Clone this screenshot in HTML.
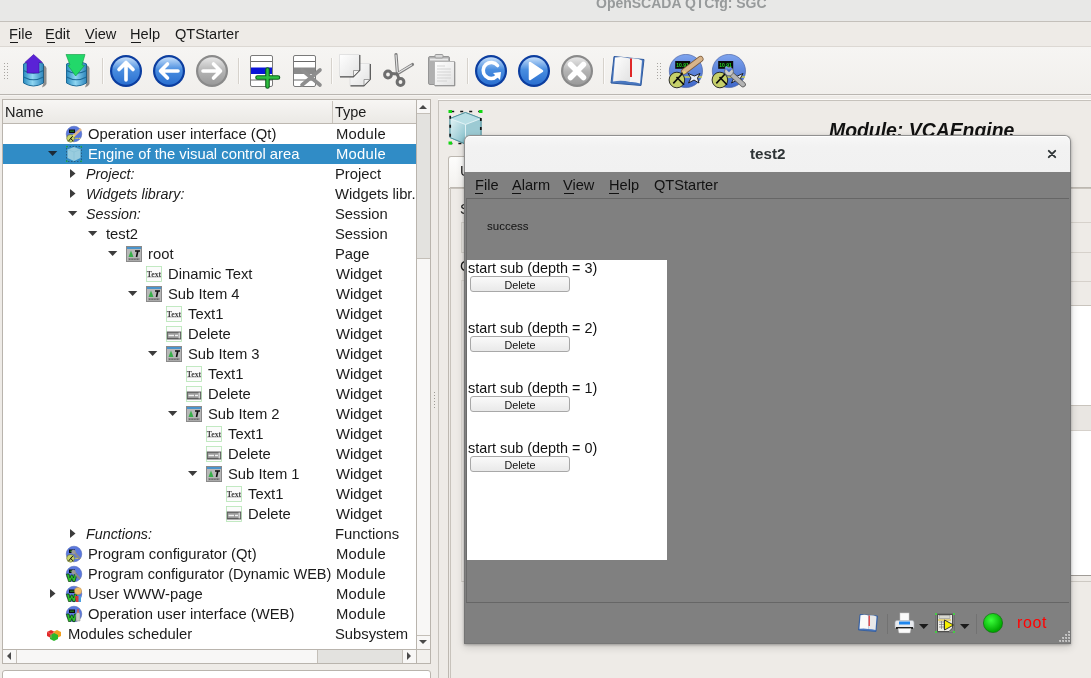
<!DOCTYPE html><html><head><meta charset='utf-8'><style>
*{margin:0;padding:0;box-sizing:border-box}
html,body{width:1091px;height:678px;overflow:hidden;background:#eeebe7;font-family:"Liberation Sans",sans-serif;position:relative}
.a{position:absolute}
.t{white-space:pre;will-change:transform}
svg{position:absolute;overflow:visible;will-change:transform}
</style></head><body><div class="a" style="left:0px;top:0px;width:1091px;height:21px;background:#e8e8e7"></div>
<div class="a" style="left:0px;top:21px;width:1091px;height:1px;background:#c4c0bb"></div>
<div class="a t" style="left:596px;top:-6.85px;font-size:14px;line-height:20px;color:#979a9b;font-weight:bold">OpenSCADA QTCfg: SGC</div>
<div class="a" style="left:0px;top:22px;width:1091px;height:24px;background:#eeebe7"></div>
<div class="a" style="left:0px;top:46px;width:1091px;height:1px;background:#dcd8d3"></div>
<div class="a t" style="left:9.4px;top:23.94px;font-size:14.6px;line-height:20px;color:#1a1a1a;">File</div>
<div class="a t" style="left:45.4px;top:23.94px;font-size:14.6px;line-height:20px;color:#1a1a1a;">Edit</div>
<div class="a t" style="left:85.4px;top:23.94px;font-size:14.6px;line-height:20px;color:#1a1a1a;">View</div>
<div class="a t" style="left:130.4px;top:23.94px;font-size:14.6px;line-height:20px;color:#1a1a1a;">Help</div>
<div class="a t" style="left:175.4px;top:23.94px;font-size:14.6px;line-height:20px;color:#1a1a1a;">QTStarter</div>
<div class="a" style="left:10px;top:42px;width:8px;height:1px;background:#1a1a1a"></div>
<div class="a" style="left:47px;top:42px;width:8px;height:1px;background:#1a1a1a"></div>
<div class="a" style="left:85px;top:42px;width:10px;height:1px;background:#1a1a1a"></div>
<div class="a" style="left:131px;top:42px;width:10px;height:1px;background:#1a1a1a"></div>
<div class="a" style="left:0px;top:47px;width:1091px;height:47px;background:linear-gradient(#f6f5f3,#f1efec)"></div>
<div class="a" style="left:0px;top:94px;width:1091px;height:1px;background:#bab6b1"></div>
<div class="a" style="left:0px;top:95px;width:1091px;height:1px;background:#f6f4f1"></div>
<div class="a" style="left:438px;top:99px;width:653px;height:1px;background:#fdfcfb"></div>
<div class="a" style="left:4px;top:63px;width:1px;height:1px;background:#a8a5a0"></div>
<div class="a" style="left:7px;top:63px;width:1px;height:1px;background:#a8a5a0"></div>
<div class="a" style="left:4px;top:66px;width:1px;height:1px;background:#a8a5a0"></div>
<div class="a" style="left:7px;top:66px;width:1px;height:1px;background:#a8a5a0"></div>
<div class="a" style="left:4px;top:69px;width:1px;height:1px;background:#a8a5a0"></div>
<div class="a" style="left:7px;top:69px;width:1px;height:1px;background:#a8a5a0"></div>
<div class="a" style="left:4px;top:72px;width:1px;height:1px;background:#a8a5a0"></div>
<div class="a" style="left:7px;top:72px;width:1px;height:1px;background:#a8a5a0"></div>
<div class="a" style="left:4px;top:75px;width:1px;height:1px;background:#a8a5a0"></div>
<div class="a" style="left:7px;top:75px;width:1px;height:1px;background:#a8a5a0"></div>
<div class="a" style="left:4px;top:78px;width:1px;height:1px;background:#a8a5a0"></div>
<div class="a" style="left:7px;top:78px;width:1px;height:1px;background:#a8a5a0"></div>
<svg width="0" height="0" style="position:absolute"><defs>
<linearGradient id="gBlueBall" x1="0" y1="0" x2="0" y2="1"><stop offset="0" stop-color="#c8e0fa"/><stop offset="0.45" stop-color="#4a8ee0"/><stop offset="1" stop-color="#2a6fd0"/></linearGradient>
<linearGradient id="gGrayBall" x1="0" y1="0" x2="0" y2="1"><stop offset="0" stop-color="#e8e8e8"/><stop offset="0.5" stop-color="#b4b4b4"/><stop offset="1" stop-color="#9a9a9a"/></linearGradient>
<linearGradient id="gCyl" x1="0" y1="0" x2="1" y2="0"><stop offset="0" stop-color="#2a8cc0"/><stop offset="0.45" stop-color="#8fd6f2"/><stop offset="1" stop-color="#2d86bd"/></linearGradient>
<linearGradient id="gPage" x1="0" y1="0" x2="1" y2="1"><stop offset="0" stop-color="#ffffff"/><stop offset="1" stop-color="#e2e2e2"/></linearGradient>
<linearGradient id="gCube" x1="0" y1="0" x2="1" y2="1"><stop offset="0" stop-color="#e4f4f6"/><stop offset="1" stop-color="#7fbcc8"/></linearGradient>
<linearGradient id="gVis" x1="0" y1="0" x2="0" y2="1"><stop offset="0" stop-color="#7ea4ee"/><stop offset="1" stop-color="#3e66c8"/></linearGradient>
</defs></svg>
<svg style="left:22px;top:54px;" width="25" height="34" viewBox="0 0 25 34"><path d="M1.5 10 Q11.5 5 21.5 10 L21.5 29 Q11.5 35 1.5 29 Z" fill="url(#gCyl)" stroke="#1d6a98" stroke-width="1"/><path d="M1.5 16.5 Q11.5 22 21.5 16.5 M1.5 23 Q11.5 28.5 21.5 23" fill="none" stroke="#1d6a98" stroke-width="1.2"/><path d="M21.5 11 Q24 12 24.5 14 L24.5 30 Q23 33 20 33.5 L21.5 29 Z" fill="#3a3a3a" opacity="0.55"/><path d="M11.6 0.5 L20.5 8.5 L17 8.5 L17 19 L5 19 L5 8.5 L2.8 8.5 Z" fill="#5a22d6" stroke="#3d10a8" stroke-width="0.6"/></svg>
<svg style="left:65px;top:54px;" width="25" height="34" viewBox="0 0 25 34"><path d="M1.5 10 Q11.5 5 21.5 10 L21.5 29 Q11.5 35 1.5 29 Z" fill="url(#gCyl)" stroke="#1d6a98" stroke-width="1"/><path d="M1.5 16.5 Q11.5 22 21.5 16.5 M1.5 23 Q11.5 28.5 21.5 23" fill="none" stroke="#1d6a98" stroke-width="1.2"/><path d="M21.5 11 Q24 12 24.5 14 L24.5 30 Q23 33 20 33.5 L21.5 29 Z" fill="#3a3a3a" opacity="0.55"/><path d="M1 0.5 L20 0.5 L17 11 L19.5 11.5 L10.7 22 L3 11.5 L5 11 Z" fill="#22d86a" stroke="#0e9a3e" stroke-width="0.6"/></svg>
<svg style="left:109px;top:54px;" width="34" height="34" viewBox="0 0 34 34"><circle cx="17" cy="17" r="16" fill="#0b3d9f"/><circle cx="17" cy="17" r="13.8" fill="url(#gBlueBall)"/><path d="M17 26 L17 9 M10 15.5 L17 8.5 L24 15.5" fill="none" stroke="#fff" stroke-width="3.6" stroke-linecap="round" stroke-linejoin="round"/></svg>
<svg style="left:152px;top:54px;" width="34" height="34" viewBox="0 0 34 34"><circle cx="17" cy="17" r="16" fill="#0b3d9f"/><circle cx="17" cy="17" r="13.8" fill="url(#gBlueBall)"/><path d="M26 17 L9 17 M15.5 10 L8.5 17 L15.5 24" fill="none" stroke="#fff" stroke-width="3.6" stroke-linecap="round" stroke-linejoin="round"/></svg>
<svg style="left:195px;top:54px;" width="34" height="34" viewBox="0 0 34 34"><circle cx="17" cy="17" r="16" fill="#8a8a8a"/><circle cx="17" cy="17" r="13.8" fill="url(#gGrayBall)"/><path d="M8 17 L25 17 M18.5 10 L25.5 17 L18.5 24" fill="none" stroke="#fff" stroke-width="3.6" stroke-linecap="round" stroke-linejoin="round"/></svg>
<svg style="left:474px;top:54px;" width="34" height="34" viewBox="0 0 34 34"><circle cx="17" cy="17" r="16" fill="#0b3d9f"/><circle cx="17" cy="17" r="13.8" fill="url(#gBlueBall)"/><path d="M23.5 11.5 A8 8 0 1 0 23 22" fill="none" stroke="#fff" stroke-width="3.6" stroke-linecap="round" stroke-linejoin="round"/><path d="M19 19 L27 18 L26 26 Z" fill="#fff"/></svg>
<svg style="left:517px;top:54px;" width="34" height="34" viewBox="0 0 34 34"><circle cx="17" cy="17" r="16" fill="#0b3d9f"/><circle cx="17" cy="17" r="13.8" fill="url(#gBlueBall)"/><path d="M13 9 L25 17 L13 25 Z" fill="#fff" stroke="#fff" stroke-width="2.5" stroke-linejoin="round"/></svg>
<svg style="left:560px;top:54px;" width="34" height="34" viewBox="0 0 34 34"><circle cx="17" cy="17" r="16" fill="#8a8a8a"/><circle cx="17" cy="17" r="13.8" fill="url(#gGrayBall)"/><path d="M10.5 10.5 L23.5 23.5 M23.5 10.5 L10.5 23.5" fill="none" stroke="#fff" stroke-width="5.5" stroke-linecap="round"/></svg>
<div class="a" style="left:102px;top:58px;width:1px;height:26px;background:#d6d2cc"></div>
<div class="a" style="left:103px;top:58px;width:1px;height:26px;background:#fbfaf9"></div>
<div class="a" style="left:238px;top:58px;width:1px;height:26px;background:#d6d2cc"></div>
<div class="a" style="left:239px;top:58px;width:1px;height:26px;background:#fbfaf9"></div>
<div class="a" style="left:331px;top:58px;width:1px;height:26px;background:#d6d2cc"></div>
<div class="a" style="left:332px;top:58px;width:1px;height:26px;background:#fbfaf9"></div>
<div class="a" style="left:467px;top:58px;width:1px;height:26px;background:#d6d2cc"></div>
<div class="a" style="left:468px;top:58px;width:1px;height:26px;background:#fbfaf9"></div>
<div class="a" style="left:603px;top:58px;width:1px;height:26px;background:#d6d2cc"></div>
<div class="a" style="left:604px;top:58px;width:1px;height:26px;background:#fbfaf9"></div>
<svg style="left:250px;top:55px;" width="30" height="33" viewBox="0 0 30 33"><rect x="0.5" y="0.5" width="22" height="31" rx="1.5" fill="#fff" stroke="#7a7a7a"/><path d="M1 6.5 H22 M1 25 H22" stroke="#6a6a6a" stroke-width="1"/><rect x="1" y="12.5" width="21" height="6.5" fill="#0a14d8"/><path d="M17.5 14.5 V31.5 M7.5 22.5 H28" stroke="#0b5e1a" stroke-width="4.6" stroke-linecap="round"/><path d="M17.5 14.5 V31.5 M7.5 22.5 H28" stroke="#2fc040" stroke-width="2.4" stroke-linecap="round"/></svg>
<svg style="left:293px;top:55px;" width="30" height="33" viewBox="0 0 30 33"><rect x="0.5" y="0.5" width="22" height="31" rx="1.5" fill="#fff" stroke="#7a7a7a"/><path d="M1 6.5 H22 M1 25 H22" stroke="#6a6a6a" stroke-width="1"/><rect x="1" y="12.5" width="21" height="6.5" fill="#8a8a8a"/><path d="M9 15 L27 30 M27 15 L9 30" stroke="#8e8e8e" stroke-width="3.6" stroke-linecap="round"/></svg>
<svg style="left:339px;top:54px;" width="33" height="34" viewBox="0 0 33 34"><path d="M11.0 9.5 H31.0 V25 L24.5 31.5 H11.0 Z" fill="url(#gPage)" stroke="#dcdcdc" stroke-width="0.8"/><path d="M31.3 10 V25.3 L24.8 31.8 H11.5" fill="none" stroke="#505050" stroke-width="1.2"/><path d="M30.5 25.5 H25.0 V31" fill="#f4f4f4" stroke="#8a8a8a" stroke-width="0.8"/><path d="M0.5 0.5 H20.5 V16 L14 22.5 H0.5 Z" fill="url(#gPage)" stroke="#dcdcdc" stroke-width="0.8"/><path d="M20.8 1 V16.3 L14.3 22.8 H1" fill="none" stroke="#505050" stroke-width="1.2"/><path d="M20 16.5 H14.5 V22" fill="#f4f4f4" stroke="#8a8a8a" stroke-width="0.8"/></svg>
<svg style="left:383px;top:53px;" width="32" height="34" viewBox="0 0 32 34"><path d="M13 1.5 L14.5 21 M29.5 11.5 L14 21" stroke="#7e7e7e" stroke-width="3.2" stroke-linecap="round"/><path d="M13 2 L14.3 19 M28.5 12 L15 20" stroke="#e4e4e4" stroke-width="1.2" stroke-linecap="round"/><circle cx="5" cy="21.5" r="3.4" fill="none" stroke="#6e6e6e" stroke-width="3"/><circle cx="17.5" cy="29" r="3.4" fill="none" stroke="#6e6e6e" stroke-width="3"/><path d="M8 20.5 L14 21 L16 25.5" stroke="#6e6e6e" stroke-width="3" fill="none"/></svg>
<svg style="left:427px;top:54px;" width="30" height="33" viewBox="0 0 30 33"><rect x="1.5" y="2.5" width="21" height="28" rx="1.5" fill="#b0b0b0" stroke="#959595"/><rect x="3" y="4.5" width="18" height="2" fill="#e8e8e8"/><rect x="8" y="0.5" width="8" height="3.5" rx="1" fill="#d8d8d8" stroke="#9a9a9a"/><rect x="7.5" y="7.5" width="20" height="24" fill="url(#gPage)" stroke="#b4b4b4"/><path d="M27.8 8 V31.8 H8" fill="none" stroke="#8a8a8a" stroke-width="1"/><path d="M10 12 H18 M10 15 H24 M10 18 H24 M10 21 H24 M10 24 H24 M10 27 H20" stroke="#d0d0d0" stroke-width="0.9"/></svg>
<svg style="left:610px;top:55px;" width="36" height="33" viewBox="0 0 36 33"><path d="M4 1.5 L34 4.5 L31 30.5 L1 28 Z" fill="#4a78c0" stroke="#2f5a9e" stroke-width="1"/><path d="M5 2.5 Q13 1 20 3.5 L20 27 Q12 25 3 26.5 Z" fill="url(#gPage)"/><path d="M20 3.5 Q27 2.5 32 5.5 L30 28.5 Q25 26.5 20 27 Z" fill="#f4f4f4"/><path d="M21 3.5 L21 22" stroke="#e02828" stroke-width="2"/></svg>
<div class="a" style="left:657px;top:63px;width:1px;height:1px;background:#a8a5a0"></div>
<div class="a" style="left:660px;top:63px;width:1px;height:1px;background:#a8a5a0"></div>
<div class="a" style="left:657px;top:66px;width:1px;height:1px;background:#a8a5a0"></div>
<div class="a" style="left:660px;top:66px;width:1px;height:1px;background:#a8a5a0"></div>
<div class="a" style="left:657px;top:69px;width:1px;height:1px;background:#a8a5a0"></div>
<div class="a" style="left:660px;top:69px;width:1px;height:1px;background:#a8a5a0"></div>
<div class="a" style="left:657px;top:72px;width:1px;height:1px;background:#a8a5a0"></div>
<div class="a" style="left:660px;top:72px;width:1px;height:1px;background:#a8a5a0"></div>
<div class="a" style="left:657px;top:75px;width:1px;height:1px;background:#a8a5a0"></div>
<div class="a" style="left:660px;top:75px;width:1px;height:1px;background:#a8a5a0"></div>
<div class="a" style="left:657px;top:78px;width:1px;height:1px;background:#a8a5a0"></div>
<div class="a" style="left:660px;top:78px;width:1px;height:1px;background:#a8a5a0"></div>
<svg style="left:669px;top:54px;" width="34" height="34" viewBox="0 0 34 34"><circle cx="16.9" cy="17" r="16.6" fill="url(#gVis)" stroke="#4a64a8" stroke-width="0.7"/><rect x="6.2" y="7" width="15" height="7.8" fill="#0a0a0a"/><text x="7.3" y="13" font-family="Liberation Sans" font-size="6" font-weight="bold" fill="#22dd22" textLength="12.5" lengthAdjust="spacingAndGlyphs">10.91</text><path d="M5 23 H33" stroke="#e0e040" stroke-width="1.3"/><path d="M19 19.5 L22 24 L19.5 29 L25 26 L30 29 L28.5 24 L31 19.5 L25.5 22 Z" fill="#e8ecf4" stroke="#111" stroke-width="0.9"/><circle cx="7.9" cy="26" r="7.8" fill="#c6d06a" stroke="#1a1a1a" stroke-width="0.9"/><path d="M4.3 29.4 L13.2 19.8 M7.5 23 L15 30.8" stroke="#0a0a0a" stroke-width="1.6"/><path d="M15 17.5 L31.5 5" stroke="#7a5a3a" stroke-width="6" stroke-linecap="round"/><path d="M15 17.5 L31.5 5" stroke="#d8b48a" stroke-width="4.6" stroke-linecap="round"/><path d="M12.5 20 L15.5 16.5 L17.5 19 Z" fill="#e8d870"/><path d="M12.2 20.3 L13.6 18.8" stroke="#111" stroke-width="1.4"/></svg>
<svg style="left:712px;top:54px;" width="34" height="34" viewBox="0 0 34 34"><circle cx="16.9" cy="17" r="16.6" fill="url(#gVis)" stroke="#4a64a8" stroke-width="0.7"/><rect x="6.2" y="7" width="15" height="7.8" fill="#0a0a0a"/><text x="7.3" y="13" font-family="Liberation Sans" font-size="6" font-weight="bold" fill="#22dd22" textLength="12.5" lengthAdjust="spacingAndGlyphs">10.91</text><path d="M5 23 H33" stroke="#e0e040" stroke-width="1.3"/><path d="M19 19.5 L22 24 L19.5 29 L25 26 L30 29 L28.5 24 L31 19.5 L25.5 22 Z" fill="#e8ecf4" stroke="#111" stroke-width="0.9"/><circle cx="7.9" cy="26" r="7.8" fill="#c6d06a" stroke="#1a1a1a" stroke-width="0.9"/><path d="M4.3 29.4 L13.2 19.8 M7.5 23 L15 30.8" stroke="#0a0a0a" stroke-width="1.6"/><path d="M18 19 L31 30.5" stroke="#5a5a5a" stroke-width="5.6" stroke-linecap="round"/><path d="M18 19 L31 30.5" stroke="#b4b4b4" stroke-width="4" stroke-linecap="round"/><circle cx="17" cy="17.5" r="4.4" fill="#c8c8c8" stroke="#5a5a5a" stroke-width="0.8"/><path d="M13.5 13 L17 16.5 L19.5 14" stroke="url(#gVis)" stroke-width="2.6" fill="none"/></svg>
<div class="a" style="left:2px;top:99px;width:429px;height:565px;border:1px solid #b9b4ad;background:#fff"></div>
<div class="a" style="left:3px;top:100px;width:413px;height:23px;background:linear-gradient(#f7f6f4,#ebe9e5)"></div>
<div class="a" style="left:3px;top:123px;width:413px;height:1px;background:#bdb8b1"></div>
<div class="a" style="left:332px;top:101px;width:1px;height:22px;background:#c8c3bc"></div>
<div class="a t" style="left:5px;top:101.68px;font-size:14.5px;line-height:20px;color:#1b1b1b;">Name</div>
<div class="a t" style="left:335px;top:101.68px;font-size:14.5px;line-height:20px;color:#1b1b1b;">Type</div>
<div class="a" style="left:3px;top:144px;width:413px;height:20px;background:#308cc6"></div>
<div class="a" style="left:3px;top:124px;width:413px;height:525px;overflow:hidden">
<div class="a" style="left:-3px;top:-124px;width:1091px;height:678px">
<svg style="left:66px;top:126px;" width="16" height="16" viewBox="0 0 16 16"><circle cx="8" cy="8" r="7.8" fill="#5a78de" stroke="#4860b0" stroke-width="0.5"/><rect x="3" y="3.5" width="6" height="3.5" fill="#0c0c0c"/><rect x="4" y="4.5" width="4" height="1.5" fill="#1d6a1d"/><path d="M8 12.3 H15" stroke="#dcd84a" stroke-width="1.3" stroke-dasharray="1.5 0.8"/><circle cx="4.6" cy="12.3" r="3.9" fill="#c8d46a" stroke="#4a5020" stroke-width="0.5"/><path d="M2.6 15 L6.8 10 M4.2 12 L7 14.8" stroke="#111" stroke-width="1"/><path d="M7.5 10 L15 3" stroke="#dcb48c" stroke-width="2.4"/><path d="M7 10.5 L8.5 9" stroke="#e0e070" stroke-width="2"/></svg>
<div class="a t" style="left:87.5px;top:123.97px;font-size:14.8px;line-height:20px;color:#1b1b1b;">Operation user interface (Qt)</div>
<div class="a t" style="left:335.5px;top:123.97px;font-size:14.8px;line-height:20px;color:#1b1b1b;letter-spacing:0.25px">Module</div>
<svg style="left:48px;top:151px;" width="10" height="5" viewBox="0 0 10 5"><path d="M0 0 H9.3 L4.65 5 Z" fill="#1b2a38"/></svg>
<svg style="left:66px;top:146px;" width="16" height="16" viewBox="0 0 16 16"><g opacity="0.8"><path d="M1.5 3.5 L8 1 L14.5 3.5 L14.5 12 L8 15 L1.5 12 Z" fill="#b4dce4"/><path d="M1.5 3.5 L8 6 L14.5 3.5 M8 6 L8 15" fill="none" stroke="#9cccd6" stroke-width="0.6"/></g><rect x="0.5" y="0.5" width="15" height="15" fill="none" stroke="#1a2a3a" stroke-width="0.9" stroke-dasharray="1.5 1.5" opacity="0.55"/><rect x="0" y="0" width="1.5" height="1.5" fill="#22aa44"/><rect x="14.5" y="0" width="1.5" height="1.5" fill="#22aa44"/><rect x="0" y="14.5" width="1.5" height="1.5" fill="#22aa44"/><rect x="14.5" y="14.5" width="1.5" height="1.5" fill="#22aa44"/></svg>
<div class="a t" style="left:87.5px;top:143.97px;font-size:14.8px;line-height:20px;color:#ffffff;">Engine of the visual control area</div>
<div class="a t" style="left:335.5px;top:143.97px;font-size:14.8px;line-height:20px;color:#ffffff;letter-spacing:0.25px">Module</div>
<svg style="left:70px;top:169px;" width="6" height="9" viewBox="0 0 6 9"><path d="M0 0 L5.5 4.5 L0 9 Z" fill="#3c3c3c"/></svg>
<div class="a t" style="left:85.5px;top:164.15px;font-size:14.3px;line-height:20px;color:#1b1b1b;font-style:italic">Project:</div>
<div class="a t" style="left:335px;top:163.97px;font-size:14.8px;line-height:20px;color:#1b1b1b;">Project</div>
<svg style="left:70px;top:189px;" width="6" height="9" viewBox="0 0 6 9"><path d="M0 0 L5.5 4.5 L0 9 Z" fill="#3c3c3c"/></svg>
<div class="a t" style="left:85.5px;top:184.15px;font-size:14.3px;line-height:20px;color:#1b1b1b;font-style:italic">Widgets library:</div>
<div class="a t" style="left:335px;top:183.97px;font-size:14.8px;line-height:20px;color:#1b1b1b;">Widgets libr.</div>
<svg style="left:68px;top:211px;" width="10" height="5" viewBox="0 0 10 5"><path d="M0 0 H9.3 L4.65 5 Z" fill="#3c3c3c"/></svg>
<div class="a t" style="left:85.5px;top:204.15px;font-size:14.3px;line-height:20px;color:#1b1b1b;font-style:italic">Session:</div>
<div class="a t" style="left:335px;top:203.97px;font-size:14.8px;line-height:20px;color:#1b1b1b;">Session</div>
<svg style="left:88px;top:231px;" width="10" height="5" viewBox="0 0 10 5"><path d="M0 0 H9.3 L4.65 5 Z" fill="#3c3c3c"/></svg>
<div class="a t" style="left:105.5px;top:223.97px;font-size:14.8px;line-height:20px;color:#1b1b1b;">test2</div>
<div class="a t" style="left:335px;top:223.97px;font-size:14.8px;line-height:20px;color:#1b1b1b;">Session</div>
<svg style="left:108px;top:251px;" width="10" height="5" viewBox="0 0 10 5"><path d="M0 0 H9.3 L4.65 5 Z" fill="#3c3c3c"/></svg>
<svg style="left:126px;top:246px;" width="16" height="16" viewBox="0 0 16 16"><rect x="0.5" y="0.5" width="15" height="15" fill="#b8b8b8" stroke="#8a8a8a"/><rect x="1" y="1" width="14" height="2" fill="#4a94cc"/><path d="M2.5 11 L5 4.5 L7.5 11 Z" fill="#38b04a"/><path d="M9 5 H14 M11.8 5 L10.5 11" stroke="#111" stroke-width="1.6"/><rect x="2" y="12" width="12" height="2.5" fill="#9a9a9a"/><path d="M3 13.2 H13" stroke="#444" stroke-width="0.8" stroke-dasharray="1 0.6"/></svg>
<div class="a t" style="left:147.5px;top:243.97px;font-size:14.8px;line-height:20px;color:#1b1b1b;">root</div>
<div class="a t" style="left:335px;top:243.97px;font-size:14.8px;line-height:20px;color:#1b1b1b;">Page</div>
<svg style="left:146px;top:266px;" width="16" height="16" viewBox="0 0 16 16"><rect x="0.5" y="0.5" width="15" height="15" fill="#fbfbfb" stroke="#b4e4b4" stroke-width="0.8"/><path d="M1 11 H15" stroke="#d0d0d0" stroke-width="1.6"/><text x="0.8" y="11" font-family="Liberation Serif" font-size="8.6" font-weight="bold" fill="#3e3e3e" textLength="14.4" lengthAdjust="spacingAndGlyphs">Text</text></svg>
<div class="a t" style="left:167.5px;top:263.97px;font-size:14.8px;line-height:20px;color:#1b1b1b;">Dinamic Text</div>
<div class="a t" style="left:336px;top:263.97px;font-size:14.8px;line-height:20px;color:#1b1b1b;">Widget</div>
<svg style="left:128px;top:291px;" width="10" height="5" viewBox="0 0 10 5"><path d="M0 0 H9.3 L4.65 5 Z" fill="#3c3c3c"/></svg>
<svg style="left:146px;top:286px;" width="16" height="16" viewBox="0 0 16 16"><rect x="0.5" y="0.5" width="15" height="15" fill="#b8b8b8" stroke="#8a8a8a"/><rect x="1" y="1" width="14" height="2" fill="#4a94cc"/><path d="M2.5 11 L5 4.5 L7.5 11 Z" fill="#38b04a"/><path d="M9 5 H14 M11.8 5 L10.5 11" stroke="#111" stroke-width="1.6"/><rect x="2" y="12" width="12" height="2.5" fill="#9a9a9a"/><path d="M3 13.2 H13" stroke="#444" stroke-width="0.8" stroke-dasharray="1 0.6"/></svg>
<div class="a t" style="left:167.5px;top:283.97px;font-size:14.8px;line-height:20px;color:#1b1b1b;">Sub Item 4</div>
<div class="a t" style="left:336px;top:283.97px;font-size:14.8px;line-height:20px;color:#1b1b1b;">Widget</div>
<svg style="left:166px;top:306px;" width="16" height="16" viewBox="0 0 16 16"><rect x="0.5" y="0.5" width="15" height="15" fill="#fbfbfb" stroke="#b4e4b4" stroke-width="0.8"/><path d="M1 11 H15" stroke="#d0d0d0" stroke-width="1.6"/><text x="0.8" y="11" font-family="Liberation Serif" font-size="8.6" font-weight="bold" fill="#3e3e3e" textLength="14.4" lengthAdjust="spacingAndGlyphs">Text</text></svg>
<div class="a t" style="left:187.5px;top:303.97px;font-size:14.8px;line-height:20px;color:#1b1b1b;">Text1</div>
<div class="a t" style="left:336px;top:303.97px;font-size:14.8px;line-height:20px;color:#1b1b1b;">Widget</div>
<svg style="left:166px;top:326px;" width="16" height="16" viewBox="0 0 16 16"><rect x="0.5" y="0.5" width="15" height="15" fill="#fbfbfb" stroke="#b4e4b4" stroke-width="0.8"/><rect x="0.8" y="5.5" width="14.4" height="8" fill="#5e5e5e"/><rect x="1.8" y="6.8" width="12.4" height="5.2" fill="#9a9a9a"/><path d="M2.5 9.5 H8 M9 9.5 H12" stroke="#f0f0f0" stroke-width="1.6"/><path d="M13.2 6.5 V12.5" stroke="#eee" stroke-width="1"/></svg>
<div class="a t" style="left:187.5px;top:323.97px;font-size:14.8px;line-height:20px;color:#1b1b1b;">Delete</div>
<div class="a t" style="left:336px;top:323.97px;font-size:14.8px;line-height:20px;color:#1b1b1b;">Widget</div>
<svg style="left:148px;top:351px;" width="10" height="5" viewBox="0 0 10 5"><path d="M0 0 H9.3 L4.65 5 Z" fill="#3c3c3c"/></svg>
<svg style="left:166px;top:346px;" width="16" height="16" viewBox="0 0 16 16"><rect x="0.5" y="0.5" width="15" height="15" fill="#b8b8b8" stroke="#8a8a8a"/><rect x="1" y="1" width="14" height="2" fill="#4a94cc"/><path d="M2.5 11 L5 4.5 L7.5 11 Z" fill="#38b04a"/><path d="M9 5 H14 M11.8 5 L10.5 11" stroke="#111" stroke-width="1.6"/><rect x="2" y="12" width="12" height="2.5" fill="#9a9a9a"/><path d="M3 13.2 H13" stroke="#444" stroke-width="0.8" stroke-dasharray="1 0.6"/></svg>
<div class="a t" style="left:187.5px;top:343.97px;font-size:14.8px;line-height:20px;color:#1b1b1b;">Sub Item 3</div>
<div class="a t" style="left:336px;top:343.97px;font-size:14.8px;line-height:20px;color:#1b1b1b;">Widget</div>
<svg style="left:186px;top:366px;" width="16" height="16" viewBox="0 0 16 16"><rect x="0.5" y="0.5" width="15" height="15" fill="#fbfbfb" stroke="#b4e4b4" stroke-width="0.8"/><path d="M1 11 H15" stroke="#d0d0d0" stroke-width="1.6"/><text x="0.8" y="11" font-family="Liberation Serif" font-size="8.6" font-weight="bold" fill="#3e3e3e" textLength="14.4" lengthAdjust="spacingAndGlyphs">Text</text></svg>
<div class="a t" style="left:207.5px;top:363.97px;font-size:14.8px;line-height:20px;color:#1b1b1b;">Text1</div>
<div class="a t" style="left:336px;top:363.97px;font-size:14.8px;line-height:20px;color:#1b1b1b;">Widget</div>
<svg style="left:186px;top:386px;" width="16" height="16" viewBox="0 0 16 16"><rect x="0.5" y="0.5" width="15" height="15" fill="#fbfbfb" stroke="#b4e4b4" stroke-width="0.8"/><rect x="0.8" y="5.5" width="14.4" height="8" fill="#5e5e5e"/><rect x="1.8" y="6.8" width="12.4" height="5.2" fill="#9a9a9a"/><path d="M2.5 9.5 H8 M9 9.5 H12" stroke="#f0f0f0" stroke-width="1.6"/><path d="M13.2 6.5 V12.5" stroke="#eee" stroke-width="1"/></svg>
<div class="a t" style="left:207.5px;top:383.97px;font-size:14.8px;line-height:20px;color:#1b1b1b;">Delete</div>
<div class="a t" style="left:336px;top:383.97px;font-size:14.8px;line-height:20px;color:#1b1b1b;">Widget</div>
<svg style="left:168px;top:411px;" width="10" height="5" viewBox="0 0 10 5"><path d="M0 0 H9.3 L4.65 5 Z" fill="#3c3c3c"/></svg>
<svg style="left:186px;top:406px;" width="16" height="16" viewBox="0 0 16 16"><rect x="0.5" y="0.5" width="15" height="15" fill="#b8b8b8" stroke="#8a8a8a"/><rect x="1" y="1" width="14" height="2" fill="#4a94cc"/><path d="M2.5 11 L5 4.5 L7.5 11 Z" fill="#38b04a"/><path d="M9 5 H14 M11.8 5 L10.5 11" stroke="#111" stroke-width="1.6"/><rect x="2" y="12" width="12" height="2.5" fill="#9a9a9a"/><path d="M3 13.2 H13" stroke="#444" stroke-width="0.8" stroke-dasharray="1 0.6"/></svg>
<div class="a t" style="left:207.5px;top:403.97px;font-size:14.8px;line-height:20px;color:#1b1b1b;">Sub Item 2</div>
<div class="a t" style="left:336px;top:403.97px;font-size:14.8px;line-height:20px;color:#1b1b1b;">Widget</div>
<svg style="left:206px;top:426px;" width="16" height="16" viewBox="0 0 16 16"><rect x="0.5" y="0.5" width="15" height="15" fill="#fbfbfb" stroke="#b4e4b4" stroke-width="0.8"/><path d="M1 11 H15" stroke="#d0d0d0" stroke-width="1.6"/><text x="0.8" y="11" font-family="Liberation Serif" font-size="8.6" font-weight="bold" fill="#3e3e3e" textLength="14.4" lengthAdjust="spacingAndGlyphs">Text</text></svg>
<div class="a t" style="left:227.5px;top:423.97px;font-size:14.8px;line-height:20px;color:#1b1b1b;">Text1</div>
<div class="a t" style="left:336px;top:423.97px;font-size:14.8px;line-height:20px;color:#1b1b1b;">Widget</div>
<svg style="left:206px;top:446px;" width="16" height="16" viewBox="0 0 16 16"><rect x="0.5" y="0.5" width="15" height="15" fill="#fbfbfb" stroke="#b4e4b4" stroke-width="0.8"/><rect x="0.8" y="5.5" width="14.4" height="8" fill="#5e5e5e"/><rect x="1.8" y="6.8" width="12.4" height="5.2" fill="#9a9a9a"/><path d="M2.5 9.5 H8 M9 9.5 H12" stroke="#f0f0f0" stroke-width="1.6"/><path d="M13.2 6.5 V12.5" stroke="#eee" stroke-width="1"/></svg>
<div class="a t" style="left:227.5px;top:443.97px;font-size:14.8px;line-height:20px;color:#1b1b1b;">Delete</div>
<div class="a t" style="left:336px;top:443.97px;font-size:14.8px;line-height:20px;color:#1b1b1b;">Widget</div>
<svg style="left:188px;top:471px;" width="10" height="5" viewBox="0 0 10 5"><path d="M0 0 H9.3 L4.65 5 Z" fill="#3c3c3c"/></svg>
<svg style="left:206px;top:466px;" width="16" height="16" viewBox="0 0 16 16"><rect x="0.5" y="0.5" width="15" height="15" fill="#b8b8b8" stroke="#8a8a8a"/><rect x="1" y="1" width="14" height="2" fill="#4a94cc"/><path d="M2.5 11 L5 4.5 L7.5 11 Z" fill="#38b04a"/><path d="M9 5 H14 M11.8 5 L10.5 11" stroke="#111" stroke-width="1.6"/><rect x="2" y="12" width="12" height="2.5" fill="#9a9a9a"/><path d="M3 13.2 H13" stroke="#444" stroke-width="0.8" stroke-dasharray="1 0.6"/></svg>
<div class="a t" style="left:227.5px;top:463.97px;font-size:14.8px;line-height:20px;color:#1b1b1b;">Sub Item 1</div>
<div class="a t" style="left:336px;top:463.97px;font-size:14.8px;line-height:20px;color:#1b1b1b;">Widget</div>
<svg style="left:226px;top:486px;" width="16" height="16" viewBox="0 0 16 16"><rect x="0.5" y="0.5" width="15" height="15" fill="#fbfbfb" stroke="#b4e4b4" stroke-width="0.8"/><path d="M1 11 H15" stroke="#d0d0d0" stroke-width="1.6"/><text x="0.8" y="11" font-family="Liberation Serif" font-size="8.6" font-weight="bold" fill="#3e3e3e" textLength="14.4" lengthAdjust="spacingAndGlyphs">Text</text></svg>
<div class="a t" style="left:247.5px;top:483.97px;font-size:14.8px;line-height:20px;color:#1b1b1b;">Text1</div>
<div class="a t" style="left:336px;top:483.97px;font-size:14.8px;line-height:20px;color:#1b1b1b;">Widget</div>
<svg style="left:226px;top:506px;" width="16" height="16" viewBox="0 0 16 16"><rect x="0.5" y="0.5" width="15" height="15" fill="#fbfbfb" stroke="#b4e4b4" stroke-width="0.8"/><rect x="0.8" y="5.5" width="14.4" height="8" fill="#5e5e5e"/><rect x="1.8" y="6.8" width="12.4" height="5.2" fill="#9a9a9a"/><path d="M2.5 9.5 H8 M9 9.5 H12" stroke="#f0f0f0" stroke-width="1.6"/><path d="M13.2 6.5 V12.5" stroke="#eee" stroke-width="1"/></svg>
<div class="a t" style="left:247.5px;top:503.97px;font-size:14.8px;line-height:20px;color:#1b1b1b;">Delete</div>
<div class="a t" style="left:336px;top:503.97px;font-size:14.8px;line-height:20px;color:#1b1b1b;">Widget</div>
<svg style="left:70px;top:529px;" width="6" height="9" viewBox="0 0 6 9"><path d="M0 0 L5.5 4.5 L0 9 Z" fill="#3c3c3c"/></svg>
<div class="a t" style="left:85.5px;top:524.15px;font-size:14.3px;line-height:20px;color:#1b1b1b;font-style:italic">Functions:</div>
<div class="a t" style="left:335px;top:523.97px;font-size:14.8px;line-height:20px;color:#1b1b1b;">Functions</div>
<svg style="left:66px;top:546px;" width="16" height="16" viewBox="0 0 16 16"><circle cx="8" cy="8" r="7.8" fill="#5a78de" stroke="#4860b0" stroke-width="0.5"/><rect x="3" y="3.5" width="6" height="3.5" fill="#0c0c0c"/><rect x="4" y="4.5" width="4" height="1.5" fill="#1d6a1d"/><path d="M8 12.3 H15" stroke="#dcd84a" stroke-width="1.3" stroke-dasharray="1.5 0.8"/><circle cx="4.6" cy="12.3" r="3.9" fill="#c8d46a" stroke="#4a5020" stroke-width="0.5"/><path d="M2.6 15 L6.8 10 M4.2 12 L7 14.8" stroke="#111" stroke-width="1"/><path d="M8 6 L14 13" stroke="#8a8a8a" stroke-width="2.2"/><circle cx="7.5" cy="6" r="2.2" fill="#9a9a9a"/></svg>
<div class="a t" style="left:87.5px;top:543.97px;font-size:14.8px;line-height:20px;color:#1b1b1b;">Program configurator (Qt)</div>
<div class="a t" style="left:335.5px;top:543.97px;font-size:14.8px;line-height:20px;color:#1b1b1b;letter-spacing:0.25px">Module</div>
<svg style="left:66px;top:566px;" width="16" height="16" viewBox="0 0 16 16"><circle cx="8" cy="8" r="7.8" fill="#5a78de" stroke="#4860b0" stroke-width="0.5"/><rect x="3" y="3.5" width="6" height="3.5" fill="#0c0c0c"/><rect x="4" y="4.5" width="4" height="1.5" fill="#1d6a1d"/><path d="M0.5 8 H3 L4 12 L5 9 H6.5 L7.5 12 L8.5 8 H11 L9 15.5 H6.8 L5.8 12.5 L4.8 15.5 H2.5 Z" fill="#2ec02e" stroke="#0a3a0a" stroke-width="0.7"/><path d="M8 6 L14 13" stroke="#8a8a8a" stroke-width="2.2"/><circle cx="7.5" cy="6" r="2.2" fill="#9a9a9a"/></svg>
<div class="a t" style="left:87.5px;top:564.08px;font-size:14.5px;line-height:20px;color:#1b1b1b;">Program configurator (Dynamic WEB)</div>
<div class="a t" style="left:335.5px;top:563.97px;font-size:14.8px;line-height:20px;color:#1b1b1b;letter-spacing:0.25px">Module</div>
<svg style="left:50px;top:589px;" width="6" height="9" viewBox="0 0 6 9"><path d="M0 0 L5.5 4.5 L0 9 Z" fill="#3c3c3c"/></svg>
<svg style="left:66px;top:586px;" width="16" height="16" viewBox="0 0 16 16"><circle cx="8" cy="8" r="7.8" fill="#5a78de" stroke="#4860b0" stroke-width="0.5"/><rect x="3" y="3.5" width="6" height="3.5" fill="#0c0c0c"/><rect x="4" y="4.5" width="4" height="1.5" fill="#1d6a1d"/><path d="M0.5 8 H3 L4 12 L5 9 H6.5 L7.5 12 L8.5 8 H11 L9 15.5 H6.8 L5.8 12.5 L4.8 15.5 H2.5 Z" fill="#2ec02e" stroke="#0a3a0a" stroke-width="0.7"/><circle cx="12" cy="5" r="3.6" fill="#f0c070" stroke="#c08a40" stroke-width="0.5"/><path d="M9 10 L15 10 L14 16 L10 16 Z" fill="#d83a3a"/><path d="M12.5 10 L15 10 L15 16 L12.5 16 Z" fill="#4aa0e0"/></svg>
<div class="a t" style="left:87.5px;top:583.97px;font-size:14.8px;line-height:20px;color:#1b1b1b;">User WWW-page</div>
<div class="a t" style="left:335.5px;top:583.97px;font-size:14.8px;line-height:20px;color:#1b1b1b;letter-spacing:0.25px">Module</div>
<svg style="left:66px;top:606px;" width="16" height="16" viewBox="0 0 16 16"><circle cx="8" cy="8" r="7.8" fill="#5a78de" stroke="#4860b0" stroke-width="0.5"/><rect x="3" y="3.5" width="6" height="3.5" fill="#0c0c0c"/><rect x="4" y="4.5" width="4" height="1.5" fill="#1d6a1d"/><path d="M0.5 8 H3 L4 12 L5 9 H6.5 L7.5 12 L8.5 8 H11 L9 15.5 H6.8 L5.8 12.5 L4.8 15.5 H2.5 Z" fill="#2ec02e" stroke="#0a3a0a" stroke-width="0.7"/><path d="M12 4 L14 8 L14 15 L10 15 L10 8 Z" fill="#c8c8c8" stroke="#888" stroke-width="0.5"/><path d="M12 3 L12 7" stroke="#d84040" stroke-width="1.2"/></svg>
<div class="a t" style="left:87.5px;top:603.97px;font-size:14.8px;line-height:20px;color:#1b1b1b;">Operation user interface (WEB)</div>
<div class="a t" style="left:335.5px;top:603.97px;font-size:14.8px;line-height:20px;color:#1b1b1b;letter-spacing:0.25px">Module</div>
<svg style="left:46px;top:626px;" width="16" height="16" viewBox="0 0 16 16"><path d="M1 6 L5 4 L9 6 L9 10 L5 12 L1 10 Z" fill="#e02828"/><path d="M7 6 L11 4 L15 6 L15 10 L11 12 L7 10 Z" fill="#f0a020"/><path d="M4 9 L8 7 L12 9 L12 13 L8 15 L4 13 Z" fill="#2cb82c"/><path d="M1 6 L5 8 L9 6 M5 8 V12" fill="none" stroke="#ff8080" stroke-width="0.6"/></svg>
<div class="a t" style="left:67.5px;top:623.97px;font-size:14.8px;line-height:20px;color:#1b1b1b;">Modules scheduler</div>
<div class="a t" style="left:335px;top:623.97px;font-size:14.8px;line-height:20px;color:#1b1b1b;">Subsystem</div>
</div></div>
<div class="a" style="left:416px;top:99px;width:15px;height:551px;border:1px solid #b9b4ad;background:#f8f7f6"></div>
<div class="a" style="left:417px;top:113px;width:13px;height:1px;background:#c4bfb8"></div>
<div class="a" style="left:417px;top:114px;width:13px;height:145px;background:#e3e2df"></div>
<div class="a" style="left:417px;top:258px;width:13px;height:1px;background:#c4bfb8"></div>
<svg style="left:419px;top:105px;" width="8" height="4" viewBox="0 0 8 4"><path d="M0 4 L4 0 L8 4 Z" fill="#4a4a4a"/></svg>
<div class="a" style="left:417px;top:635px;width:13px;height:1px;background:#c4bfb8"></div>
<svg style="left:419px;top:640px;" width="8" height="4" viewBox="0 0 8 4"><path d="M0 0 L8 0 L4 4 Z" fill="#4a4a4a"/></svg>
<div class="a" style="left:2px;top:649px;width:415px;height:15px;border:1px solid #b9b4ad;background:#f8f7f6"></div>
<div class="a" style="left:16px;top:650px;width:1px;height:13px;background:#c4bfb8"></div>
<div class="a" style="left:317px;top:650px;width:85px;height:13px;background:#e3e2df"></div>
<div class="a" style="left:317px;top:650px;width:1px;height:13px;background:#c4bfb8"></div>
<div class="a" style="left:402px;top:650px;width:1px;height:13px;background:#c4bfb8"></div>
<svg style="left:7px;top:652px;" width="4" height="8" viewBox="0 0 4 8"><path d="M4 0 L0 4 L4 8 Z" fill="#4a4a4a"/></svg>
<svg style="left:407px;top:652px;" width="4" height="8" viewBox="0 0 4 8"><path d="M0 0 L4 4 L0 8 Z" fill="#4a4a4a"/></svg>
<div class="a" style="left:416px;top:649px;width:15px;height:15px;border:1px solid #b9b4ad;background:#f2f0ed"></div>
<div class="a" style="left:2px;top:670px;width:429px;height:20px;border:1px solid #b9b4ad;border-radius:3px;background:#fff"></div>
<div class="a" style="left:434px;top:392px;width:1px;height:1px;background:#9c9994"></div>
<div class="a" style="left:434px;top:395px;width:1px;height:1px;background:#9c9994"></div>
<div class="a" style="left:434px;top:398px;width:1px;height:1px;background:#9c9994"></div>
<div class="a" style="left:434px;top:401px;width:1px;height:1px;background:#9c9994"></div>
<div class="a" style="left:434px;top:404px;width:1px;height:1px;background:#9c9994"></div>
<div class="a" style="left:434px;top:407px;width:1px;height:1px;background:#9c9994"></div>
<div class="a" style="left:438px;top:100px;width:700px;height:600px;border:1px solid #c6c2bc;background:#eeebe7"></div>
<svg style="left:448px;top:110px;" width="35" height="35" viewBox="0 0 35 35"><path d="M2 8.5 L17.4 2.5 L33 8.5 L33 27.5 L17.5 34 L2 27.5 Z" fill="#a6d2da" stroke="#5a9aa6" stroke-width="0.9"/><path d="M2 8.5 L17.4 2.5 L33 8.5 L17.5 14.5 Z" fill="#b9dfe5"/><path d="M2 8.5 L17.5 14.5 L17.5 34 L2 27.5 Z" fill="url(#gCube)"/><path d="M17.5 14.5 L33 8.5 L33 27.5 L17.5 34 Z" fill="#9ccad3"/><path d="M2 8.5 L17.5 14.5 L33 8.5 M17.5 14.5 L17.5 34" fill="none" stroke="#e8f6f8" stroke-width="0.9"/><path d="M2 8.5 L17.4 2.5 L33 8.5 L33 27.5 L17.5 34 L2 27.5 Z" fill="none" stroke="#4f8e9a" stroke-width="0.9"/><rect x="2.2" y="1.5" width="30.6" height="32" fill="none" stroke="#111" stroke-width="1.7" stroke-dasharray="3 6" stroke-dashoffset="-1"/><rect x="0.5" y="0" width="3.5" height="3" fill="#12d812"/><rect x="31" y="0" width="3.5" height="3" fill="#12d812"/><rect x="0.5" y="31.5" width="3.5" height="3" fill="#12d812"/></svg>
<div class="a t" style="left:828.5px;top:120.48px;font-size:19.4px;line-height:20px;color:#111;font-weight:bold;font-style:italic">Module: VCAEngine</div>
<div class="a" style="left:448px;top:156px;width:40px;height:33px;border:1px solid #bdb8b1;border-bottom:none;border-radius:3px 3px 0 0;background:linear-gradient(#fdfdfc,#f3f1ee)"></div>
<div class="a t" style="left:460px;top:161.28px;font-size:14.5px;line-height:20px;color:#1b1b1b;">U</div>
<div class="a" style="left:448px;top:188px;width:700px;height:600px;border:1px solid #bdb8b1;background:#eeebe7"></div>
<div class="a" style="left:450px;top:187px;width:700px;height:1px;background:#bdb8b1"></div>
<div class="a" style="left:450px;top:188px;width:700px;height:600px;border-left:1px solid #c8c3bc;border-top:1px solid #c8c3bc"></div>
<div class="a t" style="left:460px;top:198.98px;font-size:14.5px;line-height:20px;color:#1b1b1b;">S</div>
<div class="a" style="left:461px;top:222px;width:6px;height:31px;border-left:1px solid #d6d2cc;border-top:1px solid #d6d2cc;border-bottom:1px solid #d6d2cc;background:#eae7e3"></div>
<div class="a t" style="left:460px;top:256.48px;font-size:14.5px;line-height:20px;color:#1b1b1b;">C</div>
<div class="a" style="left:461px;top:280px;width:6px;height:302px;border-left:1px solid #dcd8d2;border-top:1px solid #dcd8d2;border-bottom:1px solid #d0ccc6;background:#eeebe7"></div>
<div class="a" style="left:1060px;top:222px;width:40px;height:1px;background:#d6d1cb"></div>
<div class="a" style="left:1060px;top:252px;width:40px;height:1px;background:#d6d1cb"></div>
<div class="a" style="left:1060px;top:281px;width:40px;height:1px;background:#d6d1cb"></div>
<div class="a" style="left:1060px;top:305px;width:40px;height:1px;background:#c9c4bd"></div>
<div class="a" style="left:1060px;top:306px;width:40px;height:99px;background:#fff"></div>
<div class="a" style="left:1060px;top:405px;width:40px;height:1px;background:#c9c4bd"></div>
<div class="a" style="left:1060px;top:406px;width:40px;height:24px;background:#e9e6e2"></div>
<div class="a" style="left:1060px;top:430px;width:40px;height:1px;background:#d6d1cb"></div>
<div class="a" style="left:1060px;top:431px;width:40px;height:144px;background:#fff"></div>
<div class="a" style="left:1060px;top:575px;width:40px;height:1px;background:#a09c97"></div>
<div class="a" style="left:1060px;top:581px;width:40px;height:1px;background:#cdc9c3"></div>
<div class="a" style="left:464px;top:135px;width:607px;height:509px;border-radius:6px 6px 0 0;box-shadow:0 1px 3px rgba(0,0,0,0.28), 0 3px 8px rgba(0,0,0,0.16)"></div>
<div class="a" style="left:464px;top:135px;width:607px;height:37px;border-radius:6px 6px 0 0;background:linear-gradient(#f7f7f7,#f2f2f2 30%,#f1f1f1);border:1px solid #909090;border-bottom:none;box-shadow:inset 0 1px 0 #fff"></div>
<div class="a t" style="left:750px;top:143.63px;font-size:15.2px;line-height:20px;color:#2e3436;font-weight:bold">test2</div>
<svg style="left:1048px;top:150px;" width="8" height="8" viewBox="0 0 8 8"><path d="M0.8 0.8 L7.2 7.2 M7.2 0.8 L0.8 7.2" stroke="#2e3436" stroke-width="1.9" stroke-linecap="round"/></svg>
<div class="a" style="left:464px;top:172px;width:607px;height:472px;background:#808080"></div>
<div class="a" style="left:464px;top:172px;width:1px;height:472px;background:#747474"></div>
<div class="a" style="left:1070px;top:172px;width:1px;height:472px;background:#747474"></div>
<div class="a" style="left:464px;top:643px;width:607px;height:1px;background:#777"></div>
<div class="a t" style="left:474.6px;top:174.64px;font-size:14.6px;line-height:20px;color:#111;">File</div>
<div class="a t" style="left:511.6px;top:174.64px;font-size:14.6px;line-height:20px;color:#111;">Alarm</div>
<div class="a t" style="left:562.6px;top:174.64px;font-size:14.6px;line-height:20px;color:#111;">View</div>
<div class="a t" style="left:608.6px;top:174.64px;font-size:14.6px;line-height:20px;color:#111;">Help</div>
<div class="a t" style="left:653.6px;top:174.64px;font-size:14.6px;line-height:20px;color:#111;">QTStarter</div>
<div class="a" style="left:475px;top:193px;width:8px;height:1px;background:#111"></div>
<div class="a" style="left:512px;top:193px;width:9px;height:1px;background:#111"></div>
<div class="a" style="left:564px;top:193px;width:10px;height:1px;background:#111"></div>
<div class="a" style="left:609px;top:193px;width:10px;height:1px;background:#111"></div>
<div class="a" style="left:466px;top:198px;width:603px;height:1px;background:#666"></div>
<div class="a" style="left:466px;top:199px;width:1px;height:403px;background:#6a6a6a"></div>
<div class="a t" style="left:486.5px;top:215.82px;font-size:11.5px;line-height:20px;color:#111;">success</div>
<div class="a" style="left:467px;top:260px;width:200px;height:300px;background:#fff"></div>
<div class="a t" style="left:467.5px;top:257.81px;font-size:14.4px;line-height:20px;color:#111;">start sub (depth = 3)</div>
<div class="a" style="left:470px;top:276px;width:100px;height:16px;border:1px solid #a8a8a8;border-radius:3px;background:linear-gradient(#fafafa,#e9e9e9)"></div>
<div class="a t" style="left:470px;top:276.8px;width:100px;height:16px;line-height:16px;text-align:center;font-size:10.8px;color:#111">Delete</div>
<div class="a t" style="left:467.5px;top:317.81px;font-size:14.4px;line-height:20px;color:#111;">start sub (depth = 2)</div>
<div class="a" style="left:470px;top:336px;width:100px;height:16px;border:1px solid #a8a8a8;border-radius:3px;background:linear-gradient(#fafafa,#e9e9e9)"></div>
<div class="a t" style="left:470px;top:336.8px;width:100px;height:16px;line-height:16px;text-align:center;font-size:10.8px;color:#111">Delete</div>
<div class="a t" style="left:467.5px;top:377.81px;font-size:14.4px;line-height:20px;color:#111;">start sub (depth = 1)</div>
<div class="a" style="left:470px;top:396px;width:100px;height:16px;border:1px solid #a8a8a8;border-radius:3px;background:linear-gradient(#fafafa,#e9e9e9)"></div>
<div class="a t" style="left:470px;top:396.8px;width:100px;height:16px;line-height:16px;text-align:center;font-size:10.8px;color:#111">Delete</div>
<div class="a t" style="left:467.5px;top:437.81px;font-size:14.4px;line-height:20px;color:#111;">start sub (depth = 0)</div>
<div class="a" style="left:470px;top:456px;width:100px;height:16px;border:1px solid #a8a8a8;border-radius:3px;background:linear-gradient(#fafafa,#e9e9e9)"></div>
<div class="a t" style="left:470px;top:456.8px;width:100px;height:16px;line-height:16px;text-align:center;font-size:10.8px;color:#111">Delete</div>
<div class="a" style="left:466px;top:602px;width:603px;height:1px;background:#666"></div>
<svg style="left:857px;top:613px;" width="22" height="20" viewBox="0 0 22 20"><path d="M3 1.5 L20.5 3 L19 18.5 L1.5 17 Z" fill="#4a78c0" stroke="#2f5a9e" stroke-width="0.8"/><path d="M3.5 2.2 Q8 1.2 11.5 2.5 L11.5 16 Q7 15 2.5 15.8 Z" fill="#fafafa"/><path d="M11.5 2.5 Q15.5 1.8 19.5 3.5 L18.5 17 Q15 16 11.5 16 Z" fill="#e8e8e8"/><path d="M12.2 2.5 L12.2 13" stroke="#e02828" stroke-width="1.2"/></svg>
<div class="a" style="left:887px;top:614px;width:1px;height:20px;background:#727272"></div>
<svg style="left:894px;top:612px;" width="21" height="22" viewBox="0 0 21 22"><rect x="6" y="1" width="9" height="10" fill="#fafafa" stroke="#c8c8c8" stroke-width="0.5"/><path d="M1 10.5 Q1 8.5 3 8.5 H18 Q20 8.5 20 10.5 V16 H1 Z" fill="#e8eaee" stroke="#a8acb4" stroke-width="0.6"/><rect x="5" y="9.5" width="11" height="3" fill="#1e86ee"/><rect x="2" y="15" width="17" height="2" fill="#222"/><path d="M4 16.5 H17 L16 21 H5 Z" fill="#fbfbfb" stroke="#bbb" stroke-width="0.5"/></svg>
<svg style="left:919px;top:624px;" width="10" height="5" viewBox="0 0 10 5"><path d="M0 0 H9.5 L4.75 5 Z" fill="#1a1a1a"/></svg>
<svg style="left:935px;top:613px;" width="20" height="20" viewBox="0 0 20 20"><rect x="0.5" y="0.5" width="19" height="19" fill="none" stroke="#555" stroke-width="0.7" stroke-dasharray="1 1"/><path d="M2.5 1.5 H17.5 V15 L14 18.5 H2.5 Z" fill="#ecebe4" stroke="#333" stroke-width="0.8"/><rect x="4" y="2.5" width="11" height="2.8" fill="#d8d8d0" stroke="#666" stroke-width="0.4"/><rect x="3" y="6" width="13" height="2" fill="#e0d080"/><path d="M4 9 H12 M4 11.5 H12 M4 14 H12 M6.5 8 V16 M9 8 V16" stroke="#666" stroke-width="0.6"/><path d="M9.5 7 L18.5 12 L9.5 17 Z" fill="#f6f000" stroke="#222" stroke-width="0.9" stroke-linejoin="round"/><rect x="0" y="0" width="2" height="2" fill="#4c4"/><rect x="18" y="0" width="2" height="2" fill="#4c4"/><rect x="0" y="18" width="2" height="2" fill="#4c4"/><rect x="18" y="18" width="2" height="2" fill="#4c4"/></svg>
<svg style="left:960px;top:624px;" width="10" height="5" viewBox="0 0 10 5"><path d="M0 0 H9.5 L4.75 5 Z" fill="#1a1a1a"/></svg>
<div class="a" style="left:976px;top:614px;width:1px;height:20px;background:#727272"></div>
<svg style="left:983px;top:613px;" width="20" height="20" viewBox="0 0 20 20"><defs><radialGradient id="gGreen" cx="0.4" cy="0.35" r="0.6"><stop offset="0" stop-color="#3cff3c"/><stop offset="1" stop-color="#00a800"/></radialGradient></defs><circle cx="10" cy="10" r="9.6" fill="url(#gGreen)" stroke="#056a05" stroke-width="0.6"/></svg>
<div class="a t" style="left:1016.5px;top:613.46px;font-size:16px;line-height:20px;color:#ff0000;letter-spacing:0.6px">root</div>
<div class="a" style="left:1067.5px;top:631px;width:2px;height:2px;background:#c4c4c4;border-radius:0 0 0 1px"></div>
<div class="a" style="left:1067.5px;top:634px;width:2px;height:2px;background:#c4c4c4;border-radius:0 0 0 1px"></div>
<div class="a" style="left:1064.5px;top:634px;width:2px;height:2px;background:#c4c4c4;border-radius:0 0 0 1px"></div>
<div class="a" style="left:1067.5px;top:637px;width:2px;height:2px;background:#c4c4c4;border-radius:0 0 0 1px"></div>
<div class="a" style="left:1064.5px;top:637px;width:2px;height:2px;background:#c4c4c4;border-radius:0 0 0 1px"></div>
<div class="a" style="left:1061.5px;top:637px;width:2px;height:2px;background:#c4c4c4;border-radius:0 0 0 1px"></div>
<div class="a" style="left:1067.5px;top:640px;width:2px;height:2px;background:#c4c4c4;border-radius:0 0 0 1px"></div>
<div class="a" style="left:1064.5px;top:640px;width:2px;height:2px;background:#c4c4c4;border-radius:0 0 0 1px"></div>
<div class="a" style="left:1061.5px;top:640px;width:2px;height:2px;background:#c4c4c4;border-radius:0 0 0 1px"></div>
<div class="a" style="left:1058.5px;top:640px;width:2px;height:2px;background:#c4c4c4;border-radius:0 0 0 1px"></div></body></html>
